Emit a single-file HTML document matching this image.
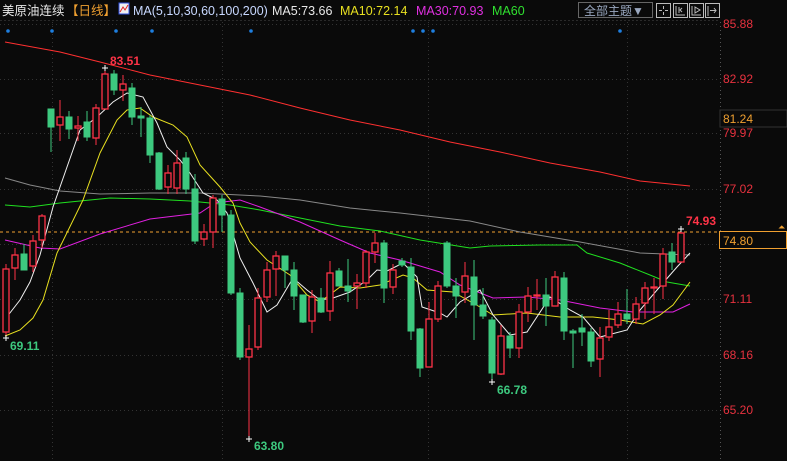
<!DOCTYPE html>
<html><head><meta charset="utf-8"><style>
html,body{margin:0;padding:0;background:#0a0a0a;width:787px;height:461px;overflow:hidden}
svg{display:block}
text{font-family:"Liberation Sans","Noto Sans CJK SC",sans-serif}
.r line{stroke:#ff3347;stroke-width:1}
.r rect{fill:#0a0a0a;stroke:#ff3347;stroke-width:1.3}
.g line{stroke:#3dc97f;stroke-width:1}
.g rect{fill:#3dc97f;stroke:#3dc97f;stroke-width:1}
.ax{fill:#e8323f;font-size:12px}
</style></head><body>
<svg width="787" height="461" viewBox="0 0 787 461" xmlns="http://www.w3.org/2000/svg">
<rect width="787" height="461" fill="#0a0a0a"/>
<!-- header -->
<text x="2" y="15" fill="#e8e8e8" font-size="12.5">美原油连续</text>
<text x="66" y="15" fill="#f0a030" font-size="12.5">【日线】</text>
<rect x="119" y="3" width="10" height="11" fill="#f0f0f0" stroke="#3050e0"/>
<polyline points="120,12 123,7 125,10 128,5" fill="none" stroke="#e02020" stroke-width="1"/>
<text x="133" y="15" fill="#c8d8ff" font-size="12.5">MA(5,10,30,60,100,200)</text>
<text x="272" y="15" fill="#e8e8e8" font-size="12.5">MA5:73.66</text>
<text x="340" y="15" fill="#e8e020" font-size="12.5">MA10:72.14</text>
<text x="416" y="15" fill="#e030e0" font-size="12.5">MA30:70.93</text>
<text x="492" y="15" fill="#30e030" font-size="12.5">MA60</text>
<rect x="578.5" y="2.5" width="74" height="15" fill="none" stroke="#666"/>
<text x="584" y="15" fill="#9aa8c0" font-size="12">全部主题▼</text>
<g fill="none" stroke="#bbb">
<rect x="656.5" y="3.5" width="14" height="14"/><rect x="673.5" y="3.5" width="14" height="14"/>
<rect x="689.5" y="3.5" width="14" height="14"/><rect x="705.5" y="3.5" width="14" height="14"/>
<path d="M663.5 6v3M663.5 12v3M659 10.5h3M665 10.5h3M676 6v9h9M679 7v6M682 8l-2 2 2 2M692 6v9h9M695 7l5 3-5 3zM708 6v10M710 10.5h6M714 8l2 2.5-2 2.5"/>
</g>
<line x1="0" y1="20.5" x2="720" y2="20.5" stroke="#2a2a2a" stroke-dasharray="2,2"/>
<!-- grid -->
<g stroke="#333" stroke-dasharray="1,3">
<line x1="0" y1="24.5" x2="720" y2="24.5"/><line x1="0" y1="79.5" x2="720" y2="79.5"/>
<line x1="0" y1="133.5" x2="720" y2="133.5"/><line x1="0" y1="189.5" x2="720" y2="189.5"/>
<line x1="0" y1="244.5" x2="720" y2="244.5"/><line x1="0" y1="299.5" x2="720" y2="299.5"/>
<line x1="0" y1="355.5" x2="720" y2="355.5"/><line x1="0" y1="410.5" x2="720" y2="410.5"/>
<line x1="52.5" y1="22" x2="52.5" y2="461"/><line x1="222.5" y1="22" x2="222.5" y2="461"/>
<line x1="428.5" y1="22" x2="428.5" y2="461"/><line x1="627.5" y1="22" x2="627.5" y2="461"/>
<line x1="720.5" y1="22" x2="720.5" y2="461" stroke="#555"/>
</g>
<g fill="#1e7fe0">
<circle cx="8" cy="31" r="1.8"/><circle cx="52" cy="31" r="1.8"/><circle cx="116" cy="31" r="1.8"/><circle cx="152" cy="31" r="1.8"/><circle cx="251" cy="31" r="1.8"/><circle cx="413" cy="31" r="1.8"/><circle cx="423" cy="31" r="1.8"/><circle cx="433" cy="31" r="1.8"/><circle cx="620" cy="31" r="1.8"/>
</g>
<!-- axis labels -->
<text class="ax" x="723" y="28">85.88</text>
<text class="ax" x="723" y="83">82.92</text>
<text class="ax" x="723" y="137">79.97</text>
<text class="ax" x="723" y="193">77.02</text>
<text class="ax" x="723" y="303">71.11</text>
<text class="ax" x="723" y="359">68.16</text>
<text class="ax" x="723" y="414">65.20</text>
<rect x="720" y="110" width="67" height="17" fill="#0a0a0a" stroke="#333"/>
<text x="723" y="123" fill="#f0a030" font-size="12">81.24</text>
<rect x="719.5" y="231.5" width="67" height="17" fill="#0a0a0a" stroke="#f0a030"/>
<text x="723" y="245" fill="#f0a030" font-size="12">74.80</text>
<text x="778" y="230" fill="#f0a030" font-size="9">⏶</text>
<line x1="0" y1="232" x2="718" y2="232" stroke="#f0a030" stroke-dasharray="3,3"/>
<!-- MAs -->
<g fill="none" stroke-width="1">
<polyline stroke="#ff3030" points="5,42 60,52 100,62 150,75 200,85 250,95 300,108 350,120 400,130 450,142 500,152 550,163 600,172 640,181 690,186"/>
<polyline stroke="#888" points="5,178 30,185 60,191 100,194 150,193 200,193 260,196 300,200 350,208 400,213 470,221 520,232 580,242 640,253 690,255"/>
<polyline stroke="#20e020" points="5,205 30,207 60,203 110,198 150,199 190,201 230,205 260,210 280,214 340,226 380,231 420,240 470,248 490,246 540,245 577,245 587,253 620,263 650,275 667,282 690,286"/>
<polyline stroke="#e020e0" points="5,240 40,248 60,249 100,234 150,219 200,213 215,203 240,200 260,207 300,222 340,240 370,253 400,260 440,272 460,285 493,298 527,297 560,300 600,308 633,312 673,312 690,304"/>
<polyline stroke="#e8e020" points="5,336 20,330 33,318 43,300 57,253 83,200 100,153 117,120 127,110 140,108 153,117 173,125 187,137 200,165 220,187 233,203 240,223 250,242 267,260 290,275 307,295 320,302 340,287 360,288 380,285 403,275 413,278 427,290 453,292 480,307 493,315 527,313 560,317 593,317 620,320 643,324 660,315 673,305 690,282"/>
<polyline stroke="#f0f0f0" points="6,318 20,300 30,282 40,255 53,207 67,167 80,130 97,117 113,102 127,93 143,97 157,123 167,147 180,160 190,173 203,193 217,200 227,213 240,258 253,283 267,312 277,305 293,278 307,290 320,300 333,298 350,292 367,280 377,270 387,271 403,263 417,277 422,307 440,313 447,317 460,302 480,290 493,315 510,335 527,332 550,297 570,310 583,317 600,337 627,330 640,310 663,283 677,267 690,253"/>
</g>
<!-- candles -->
<g class="r"><line x1="6" y1="264" x2="6" y2="338"/><rect x="3" y="269" width="6" height="63"/></g>
<g class="r"><line x1="15" y1="248" x2="15" y2="280"/><rect x="12" y="255" width="6" height="13"/></g>
<g class="g"><line x1="24" y1="244" x2="24" y2="270"/><rect x="21" y="254" width="6" height="16"/></g>
<g class="r"><line x1="33" y1="235" x2="33" y2="272"/><rect x="30" y="241" width="6" height="25"/></g>
<g class="r"><line x1="42" y1="214" x2="42" y2="248"/><rect x="39" y="216" width="6" height="24"/></g>
<g class="g"><line x1="51" y1="109" x2="51" y2="152"/><rect x="48" y="109" width="6" height="18"/></g>
<g class="r"><line x1="60" y1="100" x2="60" y2="141"/><rect x="57" y="117" width="6" height="8"/></g>
<g class="g"><line x1="69" y1="111" x2="69" y2="139"/><rect x="66" y="117" width="6" height="12"/></g>
<g class="r"><line x1="78" y1="116" x2="78" y2="141"/><rect x="75" y="126" width="6" height="2"/></g>
<g class="g"><line x1="87" y1="111" x2="87" y2="141"/><rect x="84" y="122" width="6" height="15"/></g>
<g class="r"><line x1="96" y1="104" x2="96" y2="145"/><rect x="93" y="108" width="6" height="30"/></g>
<g class="r"><line x1="105" y1="68" x2="105" y2="109"/><rect x="102" y="74" width="6" height="35"/></g>
<g class="g"><line x1="114" y1="70" x2="114" y2="95"/><rect x="111" y="74" width="6" height="16"/></g>
<g class="r"><line x1="123" y1="75" x2="123" y2="101"/><rect x="120" y="84" width="6" height="6"/></g>
<g class="g"><line x1="132" y1="83" x2="132" y2="125"/><rect x="129" y="88" width="6" height="29"/></g>
<g class="g"><line x1="141" y1="107" x2="141" y2="137"/><rect x="138" y="116" width="6" height="2"/></g>
<g class="g"><line x1="150" y1="115" x2="150" y2="163"/><rect x="147" y="118" width="6" height="37"/></g>
<g class="g"><line x1="159" y1="152" x2="159" y2="190"/><rect x="156" y="153" width="6" height="36"/></g>
<g class="r"><line x1="168" y1="165" x2="168" y2="194"/><rect x="165" y="173" width="6" height="14"/></g>
<g class="r"><line x1="177" y1="150" x2="177" y2="194"/><rect x="174" y="163" width="6" height="25"/></g>
<g class="g"><line x1="186" y1="152" x2="186" y2="194"/><rect x="183" y="158" width="6" height="31"/></g>
<g class="g"><line x1="195" y1="174" x2="195" y2="244"/><rect x="192" y="189" width="6" height="52"/></g>
<g class="r"><line x1="204" y1="224" x2="204" y2="246"/><rect x="201" y="232" width="6" height="7"/></g>
<g class="r"><line x1="213" y1="195" x2="213" y2="248"/><rect x="210" y="198" width="6" height="34"/></g>
<g class="g"><line x1="222" y1="195" x2="222" y2="232"/><rect x="219" y="199" width="6" height="16"/></g>
<g class="g"><line x1="231" y1="210" x2="231" y2="295"/><rect x="228" y="215" width="6" height="78"/></g>
<g class="g"><line x1="240" y1="288" x2="240" y2="360"/><rect x="237" y="293" width="6" height="64"/></g>
<g class="r"><line x1="249" y1="325" x2="249" y2="439"/><rect x="246" y="349" width="6" height="8"/></g>
<g class="r"><line x1="258" y1="288" x2="258" y2="350"/><rect x="255" y="298" width="6" height="49"/></g>
<g class="r"><line x1="267" y1="262" x2="267" y2="302"/><rect x="264" y="270" width="6" height="27"/></g>
<g class="r"><line x1="276" y1="251" x2="276" y2="296"/><rect x="273" y="256" width="6" height="13"/></g>
<g class="g"><line x1="285" y1="256" x2="285" y2="288"/><rect x="282" y="256" width="6" height="14"/></g>
<g class="g"><line x1="294" y1="262" x2="294" y2="310"/><rect x="291" y="270" width="6" height="26"/></g>
<g class="g"><line x1="303" y1="295" x2="303" y2="323"/><rect x="300" y="295" width="6" height="27"/></g>
<g class="r"><line x1="312" y1="290" x2="312" y2="333"/><rect x="309" y="297" width="6" height="24"/></g>
<g class="g"><line x1="321" y1="288" x2="321" y2="313"/><rect x="318" y="298" width="6" height="14"/></g>
<g class="r"><line x1="330" y1="261" x2="330" y2="321"/><rect x="327" y="273" width="6" height="38"/></g>
<g class="g"><line x1="339" y1="268" x2="339" y2="286"/><rect x="336" y="271" width="6" height="15"/></g>
<g class="g"><line x1="348" y1="259" x2="348" y2="302"/><rect x="345" y="286" width="6" height="5"/></g>
<g class="r"><line x1="357" y1="274" x2="357" y2="309"/><rect x="354" y="283" width="6" height="3"/></g>
<g class="r"><line x1="366" y1="250" x2="366" y2="288"/><rect x="363" y="252" width="6" height="31"/></g>
<g class="r"><line x1="375" y1="233" x2="375" y2="263"/><rect x="372" y="243" width="6" height="9"/></g>
<g class="g"><line x1="384" y1="240" x2="384" y2="303"/><rect x="381" y="243" width="6" height="45"/></g>
<g class="r"><line x1="393" y1="264" x2="393" y2="294"/><rect x="390" y="270" width="6" height="17"/></g>
<g class="g"><line x1="402" y1="258" x2="402" y2="267"/><rect x="399" y="261" width="6" height="4"/></g>
<g class="g"><line x1="411" y1="258" x2="411" y2="340"/><rect x="408" y="267" width="6" height="64"/></g>
<g class="g"><line x1="420" y1="328" x2="420" y2="377"/><rect x="417" y="329" width="6" height="39"/></g>
<g class="r"><line x1="429" y1="302" x2="429" y2="367"/><rect x="426" y="319" width="6" height="48"/></g>
<g class="r"><line x1="438" y1="281" x2="438" y2="322"/><rect x="435" y="286" width="6" height="33"/></g>
<g class="g"><line x1="447" y1="241" x2="447" y2="288"/><rect x="444" y="243" width="6" height="43"/></g>
<g class="g"><line x1="456" y1="278" x2="456" y2="318"/><rect x="453" y="286" width="6" height="10"/></g>
<g class="r"><line x1="465" y1="262" x2="465" y2="303"/><rect x="462" y="276" width="6" height="16"/></g>
<g class="g"><line x1="474" y1="260" x2="474" y2="340"/><rect x="471" y="277" width="6" height="28"/></g>
<g class="g"><line x1="483" y1="288" x2="483" y2="319"/><rect x="480" y="305" width="6" height="11"/></g>
<g class="g"><line x1="492" y1="317" x2="492" y2="382"/><rect x="489" y="320" width="6" height="53"/></g>
<g class="r"><line x1="501" y1="325" x2="501" y2="375"/><rect x="498" y="336" width="6" height="38"/></g>
<g class="g"><line x1="510" y1="332" x2="510" y2="358"/><rect x="507" y="336" width="6" height="12"/></g>
<g class="r"><line x1="519" y1="304" x2="519" y2="358"/><rect x="516" y="312" width="6" height="36"/></g>
<g class="r"><line x1="528" y1="287" x2="528" y2="322"/><rect x="525" y="296" width="6" height="16"/></g>
<g class="r"><line x1="537" y1="279" x2="537" y2="310"/><rect x="534" y="295" width="6" height="1"/></g>
<g class="g"><line x1="546" y1="278" x2="546" y2="326"/><rect x="543" y="295" width="6" height="11"/></g>
<g class="r"><line x1="555" y1="271" x2="555" y2="306"/><rect x="552" y="277" width="6" height="29"/></g>
<g class="g"><line x1="564" y1="272" x2="564" y2="340"/><rect x="561" y="278" width="6" height="53"/></g>
<g class="g"><line x1="573" y1="329" x2="573" y2="368"/><rect x="570" y="331" width="6" height="2"/></g>
<g class="g"><line x1="582" y1="314" x2="582" y2="346"/><rect x="579" y="328" width="6" height="4"/></g>
<g class="g"><line x1="591" y1="328" x2="591" y2="367"/><rect x="588" y="332" width="6" height="29"/></g>
<g class="r"><line x1="600" y1="327" x2="600" y2="377"/><rect x="597" y="338" width="6" height="21"/></g>
<g class="r"><line x1="609" y1="310" x2="609" y2="341"/><rect x="606" y="327" width="6" height="10"/></g>
<g class="r"><line x1="618" y1="302" x2="618" y2="328"/><rect x="615" y="314" width="6" height="11"/></g>
<g class="g"><line x1="627" y1="289" x2="627" y2="324"/><rect x="624" y="314" width="6" height="5"/></g>
<g class="r"><line x1="636" y1="297" x2="636" y2="324"/><rect x="633" y="304" width="6" height="15"/></g>
<g class="r"><line x1="645" y1="282" x2="645" y2="319"/><rect x="642" y="288" width="6" height="15"/></g>
<g class="r"><line x1="654" y1="278" x2="654" y2="314"/><rect x="651" y="287" width="6" height="1"/></g>
<g class="r"><line x1="663" y1="248" x2="663" y2="299"/><rect x="660" y="254" width="6" height="32"/></g>
<g class="g"><line x1="672" y1="243" x2="672" y2="270"/><rect x="669" y="252" width="6" height="10"/></g>
<g class="r"><line x1="681" y1="229" x2="681" y2="262"/><rect x="678" y="233" width="6" height="29"/></g>
<!-- markers & labels -->
<g stroke="#fff" stroke-width="1">
<path d="M102 68h6M105 65v6M3 338h6M6 335v6M246 439h6M249 436v6M489 382h6M492 379v6M678 229h6M681 226v6"/>
</g>
<g font-size="12" font-weight="bold">
<text x="110" y="65" fill="#ff3347">83.51</text>
<text x="10" y="350" fill="#3dc97f">69.11</text>
<text x="254" y="450" fill="#3dc97f">63.80</text>
<text x="497" y="394" fill="#3dc97f">66.78</text>
<text x="686" y="225" fill="#ff3347">74.93</text>
</g>
</svg>
</body></html>
